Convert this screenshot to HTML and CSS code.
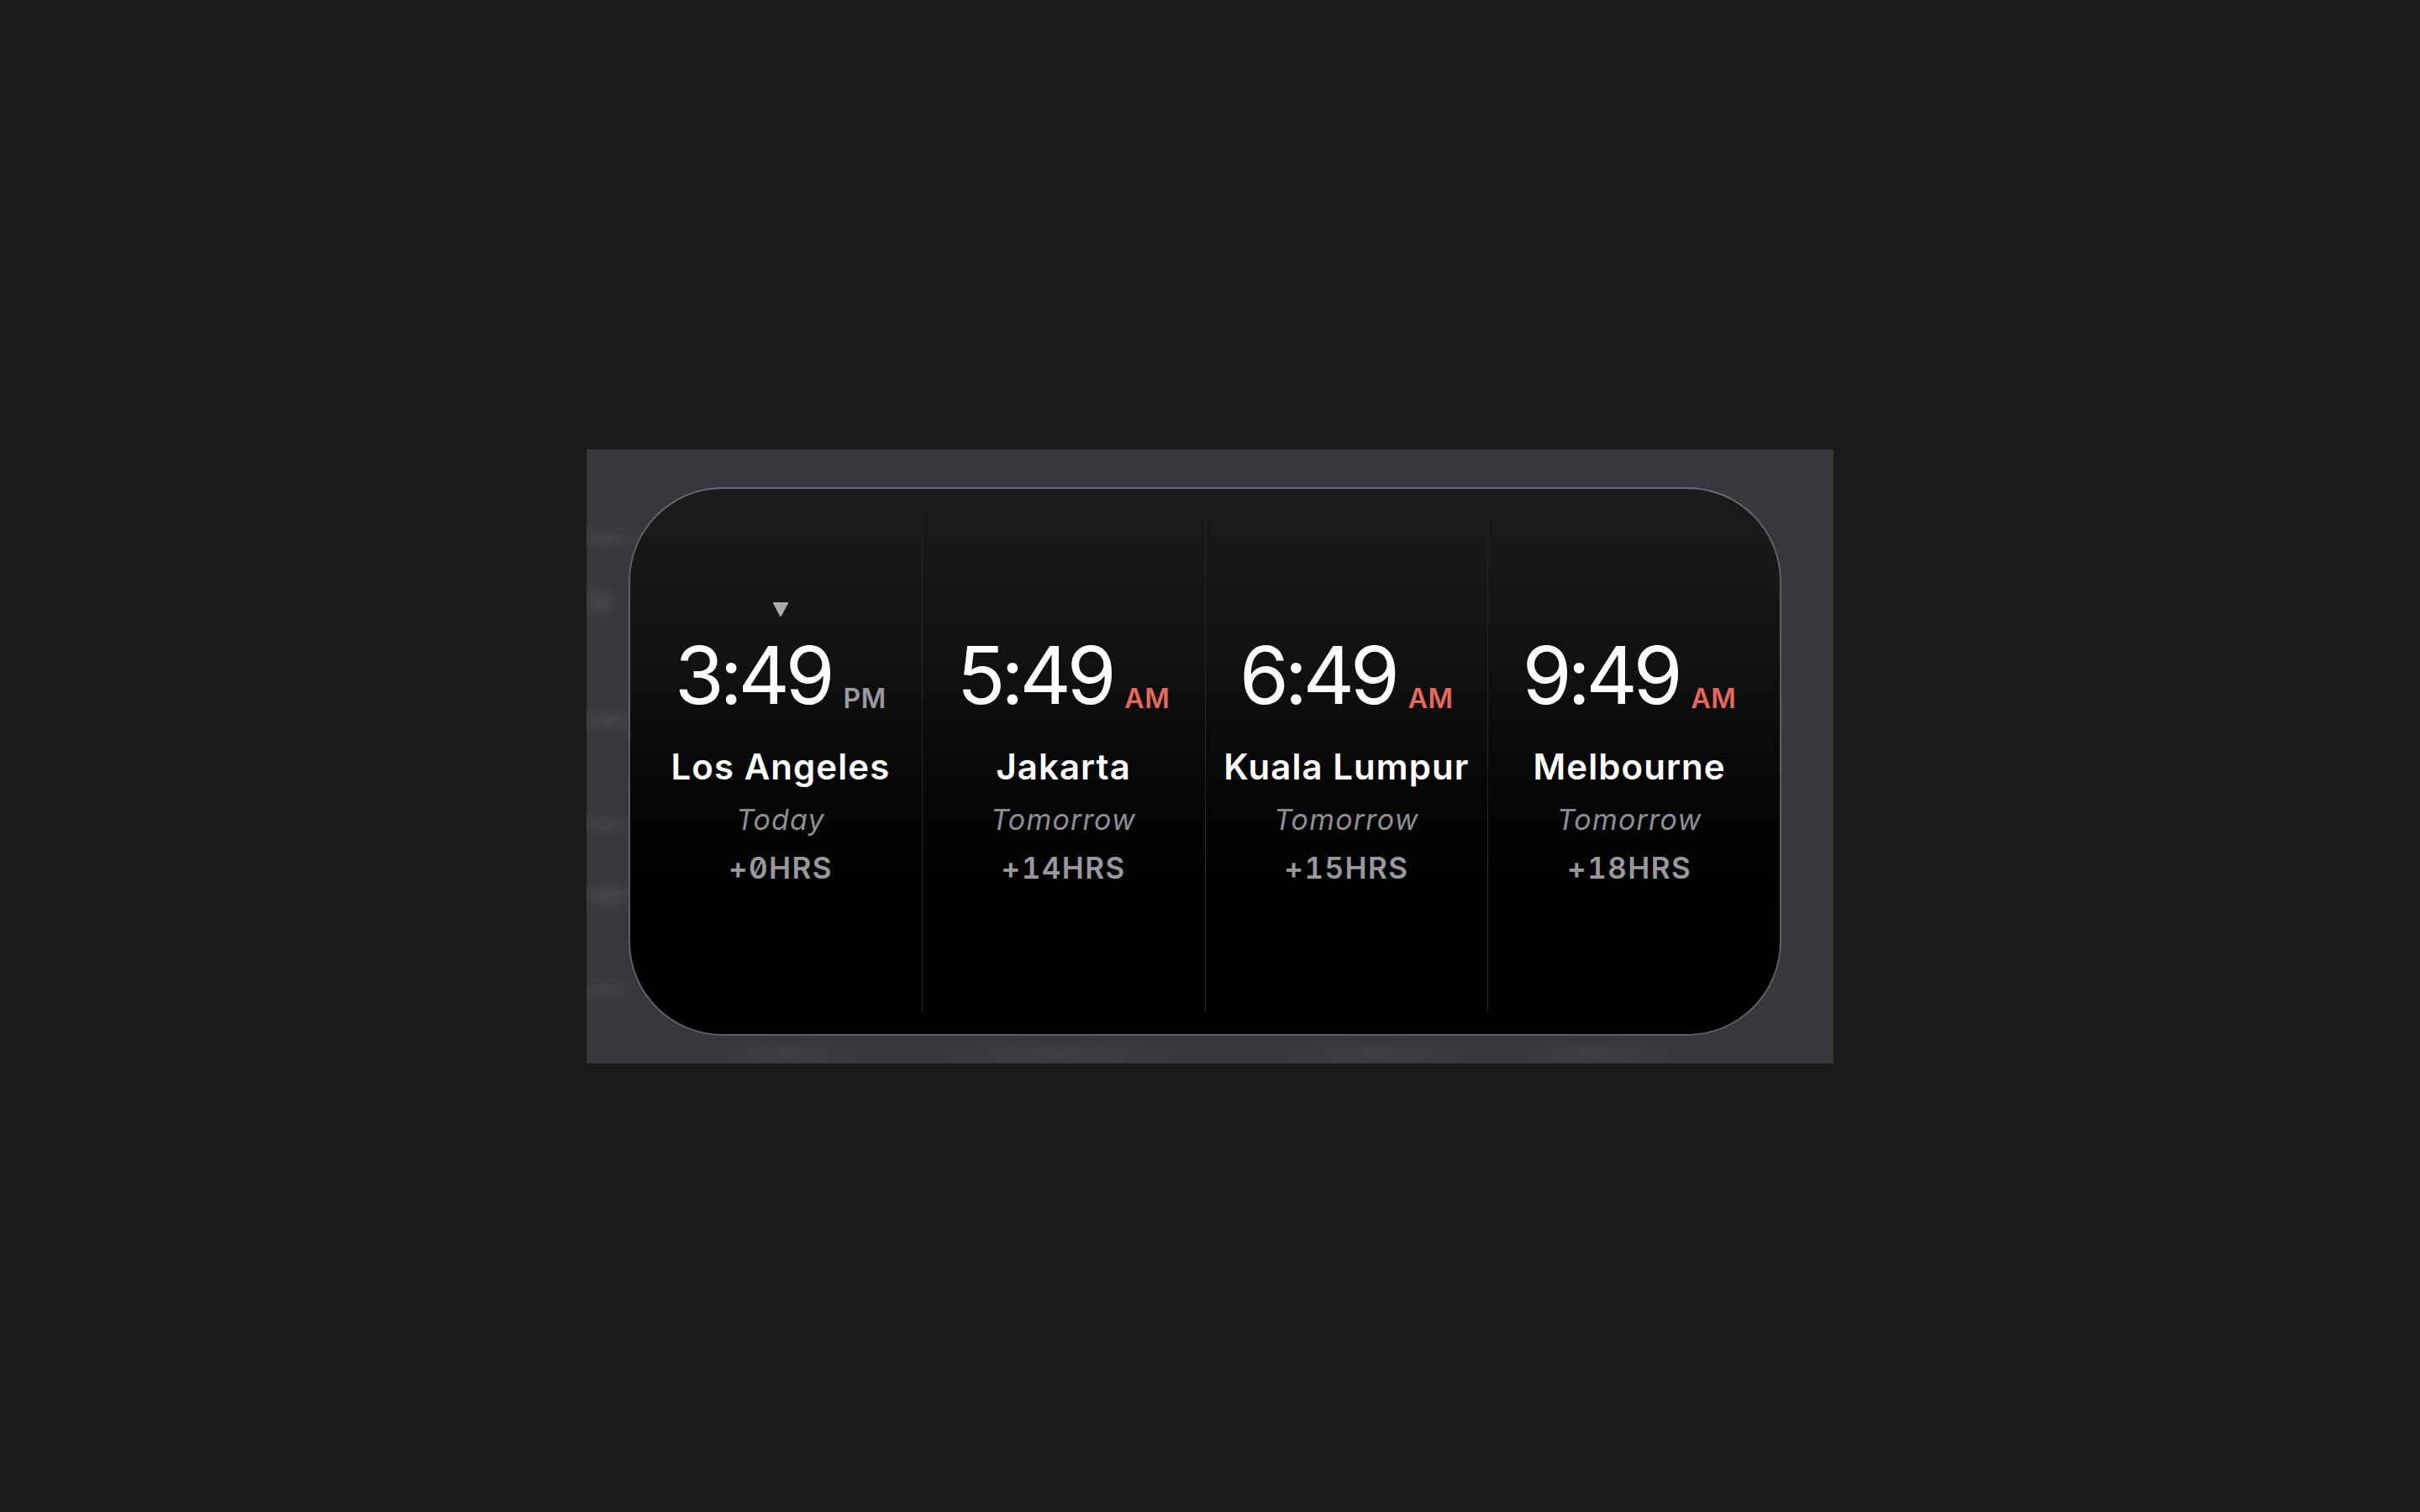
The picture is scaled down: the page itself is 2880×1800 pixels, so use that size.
FILE: index.html
```html
<!DOCTYPE html>
<html lang="en">
<head>
<meta charset="utf-8">
<title>World Clock</title>
<link rel="stylesheet" href="styles.css">
</head>
<body>
<div class="backdrop">
  <div class="card">
    <div class="col">
      <div class="marker">
        <svg class="tri" width="20" height="19" viewBox="0 0 20 19"><path d="M2 2 H18 L10 17 Z" fill="#a9a9b1" stroke="#a9a9b1" stroke-width="2" stroke-linejoin="round"/></svg>
      </div>
      <div class="time"><span class="digits">3:49</span><span class="ampm pm">PM</span></div>
      <div class="city">Los Angeles</div>
      <div class="day">Today</div>
      <div class="offset">+0HRS</div>
    </div>
    <div class="col">
      <div class="marker"></div>
      <div class="time"><span class="digits">5:49</span><span class="ampm am">AM</span></div>
      <div class="city">Jakarta</div>
      <div class="day">Tomorrow</div>
      <div class="offset">+14HRS</div>
    </div>
    <div class="col">
      <div class="marker"></div>
      <div class="time"><span class="digits">6:49</span><span class="ampm am">AM</span></div>
      <div class="city">Kuala Lumpur</div>
      <div class="day">Tomorrow</div>
      <div class="offset">+15HRS</div>
    </div>
    <div class="col">
      <div class="marker"></div>
      <div class="time"><span class="digits">9:49</span><span class="ampm am">AM</span></div>
      <div class="city">Melbourne</div>
      <div class="day">Tomorrow</div>
      <div class="offset">+18HRS</div>
    </div>
  </div>
</div>
</body>
</html>
```

FILE: styles.css
```css
html, body {
  margin: 0;
  padding: 0;
}

body {
  height: 100vh;
  background: #1a1a1a;
  display: flex;
  align-items: center;
  justify-content: center;
  font-family: Inter, "Noto Sans", "DejaVu Sans", sans-serif;
}

.backdrop {
  width: 1484px;
  height: 731px;
  box-sizing: border-box;
  padding: 45px 62px 33px 50px;
  background:
    radial-gradient(ellipse 44px 16px at 22px 106px, rgba(255,255,255,0.06), transparent),
    radial-gradient(ellipse 24px 24px at 16px 182px, rgba(255,255,255,0.08), transparent),
    radial-gradient(ellipse 48px 18px at 24px 322px, rgba(255,255,255,0.07), transparent),
    radial-gradient(ellipse 44px 16px at 22px 447px, rgba(255,255,255,0.05), transparent),
    radial-gradient(ellipse 44px 20px at 24px 531px, rgba(255,255,255,0.07), transparent),
    radial-gradient(ellipse 40px 16px at 22px 643px, rgba(255,255,255,0.05), transparent),
    radial-gradient(ellipse 90px 18px at 240px 720px, rgba(255,255,255,0.04), transparent),
    radial-gradient(ellipse 160px 18px at 560px 720px, rgba(255,255,255,0.04), transparent),
    radial-gradient(ellipse 120px 18px at 940px 720px, rgba(255,255,255,0.04), transparent),
    radial-gradient(ellipse 100px 18px at 1200px 720px, rgba(255,255,255,0.04), transparent),
    #37383c;
  background-repeat: no-repeat;
}

.card {
  width: 100%;
  height: 100%;
  box-sizing: border-box;
  border: 2px solid #5e5e63;
  border-top-color: #6a6a6f;
  border-radius: 112px;
  background: linear-gradient(180deg, #1b1b1c 0%, #121213 30%, #060606 55%, #000 75%, #000 100%);
  padding: 30px 11px 27px;
  display: flex;
}

.col {
  flex: 1;
  display: flex;
  flex-direction: column;
  align-items: center;
  padding-top: 104px;
}

.col + .col {
  border-left: 1px solid #262628;
}

.marker {
  height: 18px;
  display: flex;
  justify-content: center;
}

.tri {
  display: block;
}

.time {
  margin-top: 22px;
  display: flex;
  align-items: flex-end;
  color: #ffffff;
}

.digits {
  font-size: 95px;
  line-height: 1;
  font-weight: 400;
  letter-spacing: -0.055em;
}

.ampm {
  font-size: 32px;
  line-height: 1;
  font-weight: 600;
  margin-left: 15px;
  margin-bottom: 3px;
  letter-spacing: 0.02em;
}

.pm {
  color: #9a9aa0;
}

.am {
  color: #e8685c;
}

.city {
  margin-top: 41px;
  font-size: 42px;
  line-height: 1;
  font-weight: 600;
  letter-spacing: 0.025em;
  color: #ffffff;
}

.day {
  margin-top: 25px;
  font-size: 34px;
  line-height: 1;
  font-style: italic;
  font-weight: 400;
  letter-spacing: 0.035em;
  color: #8e8e93;
}

.offset {
  margin-top: 23px;
  font-size: 35px;
  line-height: 1;
  font-weight: 600;
  letter-spacing: 0.04em;
  color: #98989e;
  font-feature-settings: "zero" 1, "tnum" 1;
}
```
